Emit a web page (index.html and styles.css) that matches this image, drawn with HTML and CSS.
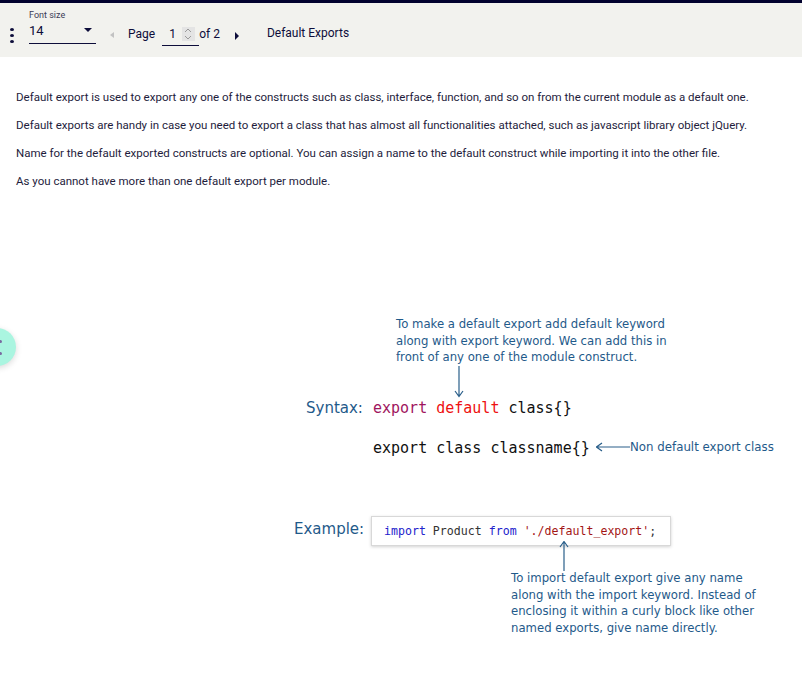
FILE: index.html
```html
<!DOCTYPE html>
<html>
<head>
<meta charset="utf-8">
<link rel="stylesheet" href="styles.css">
</head>
<body>
<div class="topline"></div>
<div class="toolbar">
  <div class="kebab"><span></span><span></span><span></span></div>
  <div class="fontsize">
    <div class="fs-label">Font size</div>
    <div class="fs-select"><span>14</span><span class="caret"></span></div>
  </div>
  <div class="pager">
    <span class="prev"></span>
    <span class="page-label">Page</span>
    <div class="page-input"><span class="pnum">1</span><span class="spin"><svg width="8" height="14" viewBox="0 0 8 14"><path d="M1 5 L4 2 L7 5" fill="none" stroke="#9a9a9a" stroke-width="1"/><path d="M1 9 L4 12 L7 9" fill="none" stroke="#9a9a9a" stroke-width="1"/></svg></span></div>
    <span class="of">of 2</span>
    <span class="next"></span>
  </div>
  <div class="title">Default Exports</div>
</div>
<div class="content">
  <p>Default export is used to export any one of the constructs such as class, interface, function, and so on from the current module as a default one.</p>
  <p>Default exports are handy in case you need to export a class that has almost all functionalities attached, such as javascript library object jQuery.</p>
  <p>Name for the default exported constructs are optional. You can assign a name to the default construct while importing it into the other file.</p>
  <p>As you cannot have more than one default export per module.</p>
</div>
<div class="fab"><span></span><span></span></div>
<div class="diagram">
  <div class="note note1">To make a default export add default keyword<br>along with export keyword. We can add this in<br>front of any one of the module construct.</div>
  <svg class="arr arr-down" width="10" height="32" viewBox="0 0 10 32"><path d="M5 0 V30 M1 25 L5 30.5 L9 25" fill="none" stroke="#2a5f8a" stroke-width="1.2"/></svg>
  <div class="syntax"><span class="lbl">Syntax:</span><span class="code"><span class="k-exp">export</span> <span class="k-def">default</span> class{}</span></div>
  <div class="code line2">export class classname{}</div>
  <svg class="arr arr-left" width="34" height="10" viewBox="0 0 34 10"><path d="M34 5 H1 M6 1 L0.5 5 L6 9" fill="none" stroke="#2a5f8a" stroke-width="1.2"/></svg>
  <div class="note note2">Non default export class</div>
  <div class="example-lbl">Example:</div>
  <div class="codebox"><span class="kw">import</span> Product <span class="kw">from</span> <span class="str">'./default_export'</span>;</div>
  <svg class="arr arr-up" width="10" height="30" viewBox="0 0 10 30"><path d="M5 30 V1 M1 6 L5 0.5 L9 6" fill="none" stroke="#2a5f8a" stroke-width="1.2"/></svg>
  <div class="note note3">To import default export give any name<br>along with the import keyword. Instead of<br>enclosing it within a curly block like other<br>named exports, give name directly.</div>
</div>
</body>
</html>
```
FILE: styles.css
```css
html, body { margin: 0; padding: 0; background: #fff; }
body { width: 802px; height: 677px; overflow: hidden; position: relative; font-family: Roboto, "Liberation Sans", sans-serif; }
.topline { height: 3px; background: #02022e; }
.toolbar { height: 54px; background: #f2f2ee; display: flex; align-items: flex-start; color: #0d0d3a; }
.kebab { display: flex; flex-direction: column; gap: 3px; margin: 25px 0 0 10px; width: 4px; }
.kebab span { width: 4px; height: 3px; border-radius: 50%; background: #0d0d3a; }
.fontsize { margin-left: 15px; width: 67px; }
.fs-label { font-size: 9px; color: #3b3b55; margin-top: 6px; height: 12px; line-height: 12px; }
.fs-select { display: flex; justify-content: space-between; align-items: center; border-bottom: 1px solid #0d0d3a; height: 22px; font-size: 13px; }
.fs-select span:first-child { margin-top: -4px; }
.caret { width: 0; height: 0; border-left: 4px solid transparent; border-right: 4px solid transparent; border-top: 4px solid #0d0d3a; margin-right: 4px; margin-top: -4px; }
.pager { display: flex; align-items: center; margin-left: 14px; margin-top: 21px; font-size: 12px; height: 20px; }
.prev { width: 0; height: 0; border-top: 3.5px solid transparent; border-bottom: 3.5px solid transparent; border-right: 4px solid #c2c2c2; margin-right: 14px; margin-top: 2px; }
.page-label { margin-right: 7px; }
.page-input { display: flex; align-items: center; border-bottom: 1px solid #0d0d3a; height: 21px; width: 37px; margin-top: 2px; }
.pnum { margin-left: 7px; margin-right: 6px; margin-top: -2px; }
.spin { width: 13px; height: 14px; background: #e4e4e4; display: flex; justify-content: center; margin-top: -2px; }
.of { margin-left: 0; margin-right: 15px; }
.next { width: 0; height: 0; border-top: 4px solid transparent; border-bottom: 4px solid transparent; border-left: 4px solid #0d0d3a; margin-top: 3px; }
.title { margin-left: 28px; margin-top: 23px; font-size: 12px; }
.content { padding: 34px 16px 0; color: #1e1c3c; font-size: 11.5px; }
.content p { margin: 0 0 15px; line-height: 13px; }
.fab { position: absolute; left: -22px; top: 328px; width: 38px; height: 38px; border-radius: 50%; background: #aaf5e0; box-shadow: 0 2px 6px rgba(0,0,0,0.15); }
.fab span { position: absolute; left: 21px; width: 3px; height: 3px; border-radius: 50%; background: #7a6aa0; }
.fab span:first-child { top: 12px; }
.fab span:last-child { top: 24px; }
.diagram { position: absolute; left: 0; top: 300px; width: 802px; height: 377px; }
.note { position: absolute; font-family: "DejaVu Sans", Verdana, sans-serif; font-size: 11.7px; line-height: 16.5px; color: #1f5a8a; white-space: nowrap; }
.note1 { left: 396px; top: 16px; }
.arr { position: absolute; }
.arr-down { left: 454px; top: 66px; }
.syntax { position: absolute; left: 306px; top: 98px; line-height: 20px; white-space: nowrap; display: flex; align-items: baseline; }
.lbl { font-family: "DejaVu Sans", Verdana, sans-serif; color: #1f5a8a; font-size: 15px; width: 67px; }
.code { font-family: "DejaVu Sans Mono", Consolas, monospace; font-size: 15px; color: #111; white-space: nowrap; }
.k-exp { color: #a0155e; }
.k-def { color: #ee1111; }
.line2 { position: absolute; left: 373px; top: 138px; line-height: 20px; }
.arr-left { left: 596px; top: 142px; }
.note2 { left: 630px; top: 139px; font-size: 11.8px; }
.example-lbl { position: absolute; left: 294px; top: 219px; font-family: "DejaVu Sans", Verdana, sans-serif; font-size: 15px; color: #1f5a8a; line-height: 20px; }
.codebox { position: absolute; left: 371px; top: 216px; width: 286px; height: 28px; padding-left: 12px; line-height: 29px; border: 1px solid #d8d8d8; box-shadow: 0 1px 3px rgba(0,0,0,0.18); font-family: "DejaVu Sans Mono", Consolas, monospace; font-size: 11.6px; color: #333; white-space: nowrap; background: #fff; }
.kw { color: #2222cc; }
.str { color: #a31515; }
.arr-up { left: 559px; top: 241px; }
.note3 { left: 511px; top: 270px; }
```
